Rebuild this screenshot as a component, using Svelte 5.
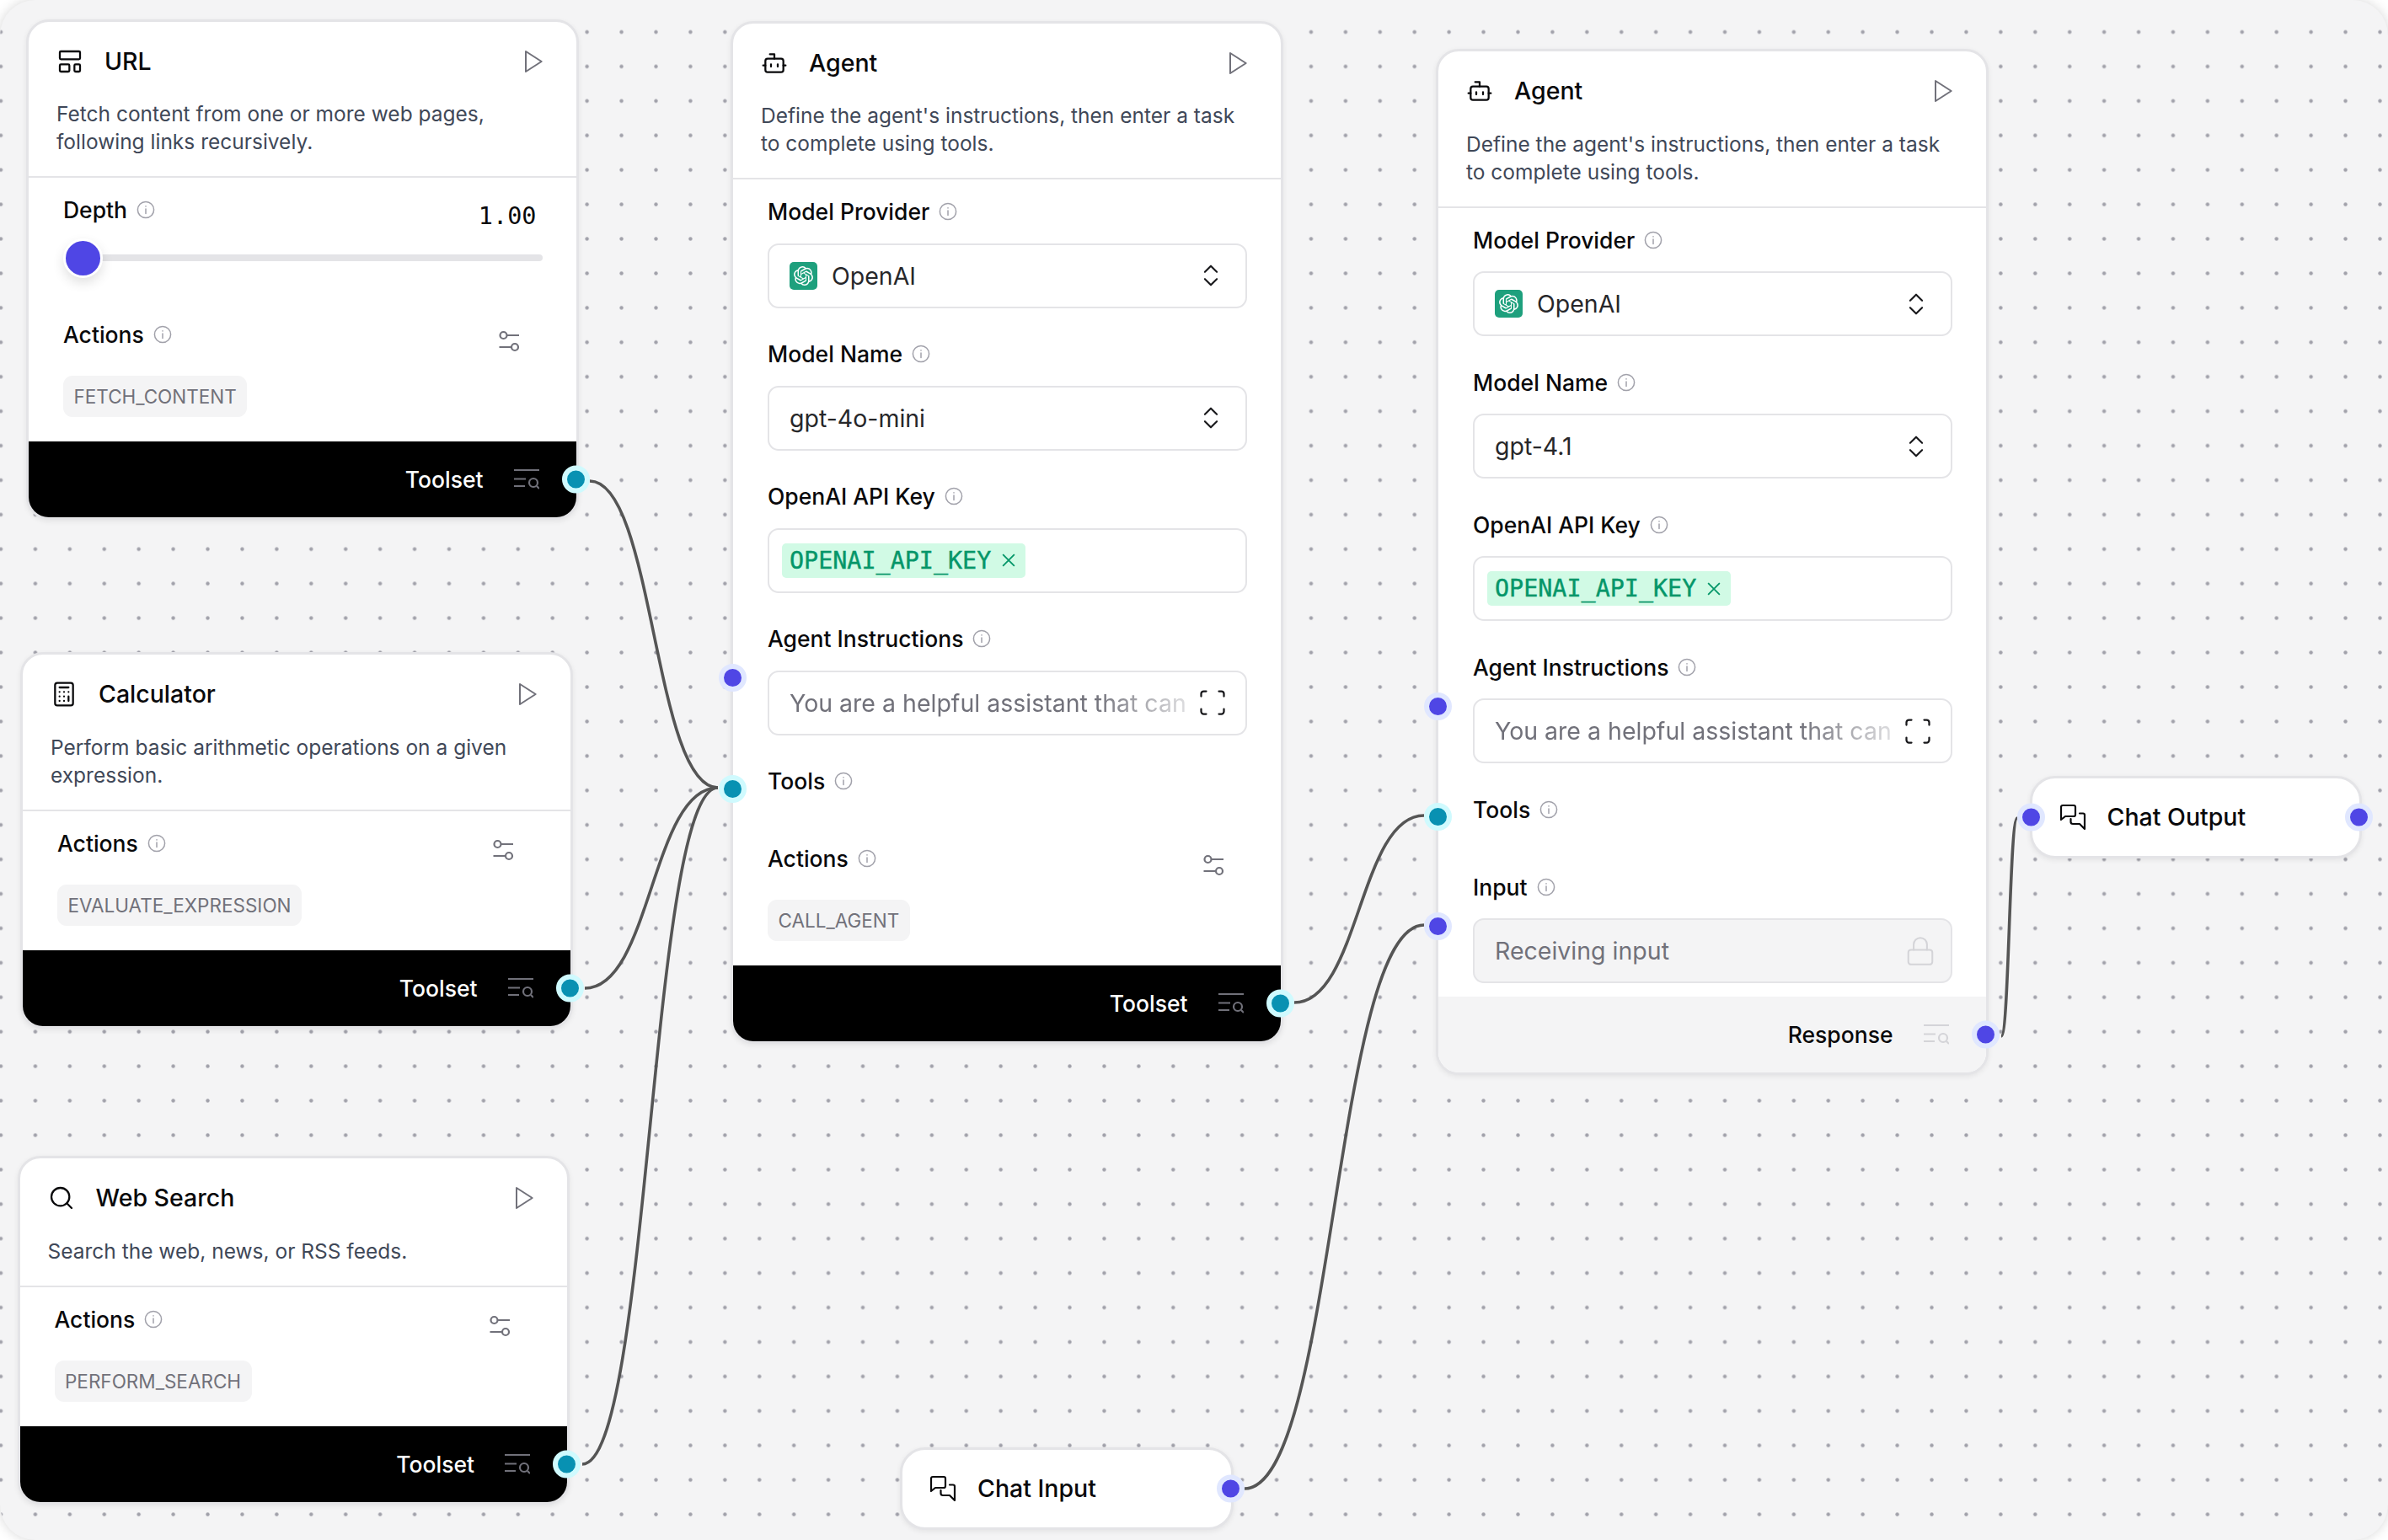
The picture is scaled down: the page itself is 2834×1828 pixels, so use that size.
<script>
  const DOT = 40.92;

  const tools = (name, title, desc, icon, left, top, chip, depth = false) => ({
    name, title, desc, icon, left, top, chip, depth, footer: "Toolset", dark: true
  });

  const agent = (left, top, model, extra) => ({
    title: "Agent",
    desc: "Define the agent's instructions, then enter a task to complete using tools.",
    icon: "bot", left, top, model, extra, agent: true,
    footer: extra ? "Response" : "Toolset", dark: !extra
  });

  const nodes = [
    tools("url", "URL", "Fetch content from one or more web pages, following links recursively.", "layout", 31, 22.5, "FETCH_CONTENT", true),
    tools("calc", "Calculator", "Perform basic arithmetic operations on a given expression.", "calculator", 24, 774, "EVALUATE_EXPRESSION"),
    tools("web", "Web Search", "Search the web, news, or RSS feeds.", "search", 20.5, 1372, "PERFORM_SEARCH"),
    agent(867, 24.5, "gpt-4o-mini", false),
    agent(1704, 58, "gpt-4.1", true)
  ];

  const chats = [
    { title: "Chat Input", left: 1068, top: 1717.5, width: 395.5, input: false },
    { title: "Chat Output", left: 2408.5, top: 921, width: 394.5, input: true }
  ];

  function bez(sx, sy, tx, ty) {
    const mx = (sx + tx) / 2;
    return `M${sx} ${sy} C${mx} ${sy} ${mx} ${ty} ${tx} ${ty}`;
  }

  const edges = [
    bez(700, 571, 852, 935),
    bez(694, 1173, 852, 935),
    bez(691, 1738, 852, 935),
    bez(1536, 1190, 1690, 968),
    bez(1477, 1767, 1690, 1098),
    bez(2375, 1230, 2394, 971)
  ];

  const openai = "M22.2819 9.8211a5.9847 5.9847 0 0 0-.5157-4.9108 6.0462 6.0462 0 0 0-6.5098-2.9A6.0651 6.0651 0 0 0 4.9807 4.1818a5.9847 5.9847 0 0 0-3.9977 2.9 6.0462 6.0462 0 0 0 .7427 7.0966 5.98 5.98 0 0 0 .511 4.9107 6.051 6.051 0 0 0 6.5146 2.9001A5.9847 5.9847 0 0 0 13.2599 24a6.0557 6.0557 0 0 0 5.7718-4.2058 5.9894 5.9894 0 0 0 3.9977-2.9001 6.0557 6.0557 0 0 0-.7475-7.0729zm-9.022 12.6081a4.4755 4.4755 0 0 1-2.8764-1.0408l.1419-.0804 4.7783-2.7582a.7948.7948 0 0 0 .3927-.6813v-6.7369l2.02 1.1686a.071.071 0 0 1 .038.052v5.5826a4.504 4.504 0 0 1-4.4945 4.4944zm-9.6607-4.1254a4.4708 4.4708 0 0 1-.5346-3.0137l.142.0852 4.783 2.7582a.7712.7712 0 0 0 .7806 0l5.8428-3.3685v2.3324a.0804.0804 0 0 1-.0332.0615L9.74 19.9502a4.4992 4.4992 0 0 1-6.1408-1.6464zM2.3408 7.8956a4.485 4.485 0 0 1 2.3655-1.9728V11.6a.7664.7664 0 0 0 .3879.6765l5.8144 3.3543-2.0201 1.1685a.0757.0757 0 0 1-.071 0l-4.8303-2.7865A4.504 4.504 0 0 1 2.3408 7.872zm16.5963 3.8558L13.1038 8.364 15.1192 7.2a.0757.0757 0 0 1 .071 0l4.8303 2.7913a4.4944 4.4944 0 0 1-.6765 8.1042v-5.6772a.79.79 0 0 0-.407-.667zm2.0107-3.0231l-.142-.0852-4.7735-2.7818a.7759.7759 0 0 0-.7854 0L9.409 9.2297V6.8974a.0662.0662 0 0 1 .0284-.0615l4.8303-2.7866a4.4992 4.4992 0 0 1 6.6802 4.66zM8.3065 12.863l-2.02-1.1638a.0804.0804 0 0 1-.038-.0567V6.0742a4.4992 4.4992 0 0 1 7.3757-3.4537l-.142.0805L8.704 5.459a.7948.7948 0 0 0-.3927.6813zm1.0976-2.3654l2.602-1.4998 2.6069 1.4998v2.9994l-2.5974 1.4997-2.6067-1.4997Z";
</script>

{#snippet nodeIcon(kind)}
  <svg class="icon" viewBox="0 0 24 24">
    {#if kind === "layout"}
      <rect x="3" y="3" width="18" height="7" rx="1" />
      <rect x="3" y="14.5" width="8.5" height="6.5" rx="1" />
      <rect x="16" y="14.5" width="5" height="6.5" rx="1" />
    {:else if kind === "bot"}
      <path d="M12 8V4H8" />
      <rect x="4" y="8" width="16" height="12" rx="2" />
      <path d="M2 14h2M20 14h2M15 13v2M9 13v2" />
    {:else if kind === "calculator"}
      <rect x="4" y="2" width="16" height="20" rx="2" />
      <path d="M8 6h8M16 14v4M16 10h.01M12 10h.01M8 10h.01M12 14h.01M8 14h.01M12 18h.01M8 18h.01" />
    {:else if kind === "search"}
      <circle cx="11" cy="11" r="8" />
      <path d="m21 21-4.3-4.3" />
    {/if}
  </svg>
{/snippet}

{#snippet info()}
  <svg class="info" viewBox="0 0 22 22">
    <circle cx="11" cy="11" r="9.6" />
    <path d="M11 10v5.5M11 6.8v.3" />
  </svg>
{/snippet}

{#snippet label(text)}
  <div class="label">{text}{@render info()}</div>
{/snippet}

{#snippet handle(side, color, place)}
  <span class="handle {side} {color} {place}"></span>
{/snippet}

{#snippet chevrons()}
  <svg class="chevrons" viewBox="0 0 24 24"><path d="m7 15 5 5 5-5M7 9l5-5 5 5" /></svg>
{/snippet}

{#snippet actions(chip)}
  <div class="field actions">
    <div class="label-row">
      {@render label("Actions")}
      <svg class="sliders" viewBox="0 0 32 32">
        <circle cx="9.5" cy="8" r="4" />
        <path d="M13.5 8H28M4.5 22H19" />
        <circle cx="23" cy="22" r="4" />
      </svg>
    </div>
    <div><span class="chip">{chip}</span></div>
  </div>
{/snippet}

{#snippet agentBody(node)}
  <div class="field">
    {@render label("Model Provider")}
    <div class="control">
      <span class="logo"><svg viewBox="0 0 24 24"><path d={openai} /></svg></span>
      <span class="value">OpenAI</span>
      {@render chevrons()}
    </div>
  </div>
  <div class="field">
    {@render label("Model Name")}
    <div class="control">
      <span class="value">{node.model}</span>
      {@render chevrons()}
    </div>
  </div>
  <div class="field">
    {@render label("OpenAI API Key")}
    <div class="control key">
      <span class="secret">
        OPENAI_API_KEY
        <svg viewBox="5 5 14 14"><path d="M18 6 6 18M6 6l12 12" /></svg>
      </span>
    </div>
  </div>
  <div class="field">
    {@render handle("left", "indigo", "at-control")}
    {@render label("Agent Instructions")}
    <div class="control">
      <span class="value faded">You are a helpful assistant that can</span>
      <svg class="expand" viewBox="0 0 24 24">
        <path d="M3 7V5a2 2 0 0 1 2-2h2M17 3h2a2 2 0 0 1 2 2v2M21 17v2a2 2 0 0 1-2 2h-2M7 21H5a2 2 0 0 1-2-2v-2" />
      </svg>
    </div>
  </div>
  <div class="field bare">
    {@render handle("left", "cyan", "at-label")}
    {@render label("Tools")}
  </div>
  {#if node.extra}
    <div class="field last">
      {@render handle("left", "indigo", "at-control")}
      {@render label("Input")}
      <div class="control disabled">
        <span class="value muted">Receiving input</span>
        <svg class="lock" viewBox="0 0 24 24">
          <rect x="3" y="11" width="18" height="11" rx="2" />
          <path d="M7 11V7a5 5 0 0 1 10 0v4" />
        </svg>
      </div>
    </div>
  {:else}
    {@render actions("CALL_AGENT")}
  {/if}
{/snippet}

<div class="canvas">
  <svg class="wires" width="2834" height="1828">
    <defs>
      <pattern id="dots" x={1 - DOT / 2} y={38 - DOT / 2} width={DOT} height={DOT} patternUnits="userSpaceOnUse">
        <circle cx={DOT / 2} cy={DOT / 2} r="2.2" fill="#a1a1aa" />
      </pattern>
    </defs>
    <rect width="2834" height="1828" fill="url(#dots)" />
    {#each edges as d}
      <path {d} class="edge" />
    {/each}
  </svg>

  {#each nodes as node}
    <article class="node" style="left: {node.left}px; top: {node.top}px">
      <header class="head">
        <div class="title-row">
          {@render nodeIcon(node.icon)}
          <h2>{node.title}</h2>
          <svg class="play" viewBox="0 0 24 24"><path d="M6 3l14 9-14 9z" /></svg>
        </div>
        <p>{node.desc}</p>
      </header>
      <div class="body">
        {#if node.agent}
          {@render agentBody(node)}
        {:else}
          {#if node.depth}
            <div class="field depth">
              <div class="label-row">
                {@render label("Depth")}
                <span class="amount">1.00</span>
              </div>
              <div class="slider"><span class="thumb"></span><span class="track"></span></div>
            </div>
          {/if}
          {@render actions(node.chip)}
        {/if}
      </div>
      <footer class="foot" class:dark={node.dark}>
        <span>{node.footer}</span>
        <svg class="foot-icon" viewBox="0 0 30 24">
          <path d="M0 1h30M0 11.5h14M0 20h13" />
          <circle cx="23" cy="16" r="5" />
          <path d="m27 20 3 3" />
        </svg>
        {@render handle("right", node.dark ? "cyan" : "indigo", "middle")}
      </footer>
    </article>
  {/each}

  {#each chats as chat}
    <article class="node chat" style="left: {chat.left}px; top: {chat.top}px; width: {chat.width}px">
      {#if chat.input}
        {@render handle("left", "indigo", "middle")}
      {/if}
      <svg class="icon" viewBox="15 14 32 32">
        <path d="M16 33V18q0-2 2-2h13q2 0 2 2v9q0 2-2 2H21z" />
        <path d="M38 25.500h4q2 0 2 2V44l-6-6h-8q-2.500 0-2.500-2.500V32" />
      </svg>
      <h2>{chat.title}</h2>
      {@render handle("right", "indigo", "middle")}
    </article>
  {/each}
</div>

<style>
  :global(body) {
    background: #fff;
  }

  .canvas {
    position: relative;
    width: 2834px;
    height: 1828px;
    overflow: hidden;
    background: #f4f4f5;
    border-radius: 42px;
    box-shadow: 0 0 14px rgba(0, 0, 0, 0.16);
    font-family: Inter, "Liberation Sans", sans-serif;
    color: #09090b;
  }

  .wires {
    position: absolute;
    left: 0;
    top: 0;
  }

  .edge {
    fill: none;
    stroke: #555;
    stroke-width: 3.600;
  }

  .node {
    position: absolute;
    box-sizing: border-box;
    width: 655.500px;
    background: #fff;
    border: 3px solid #e4e4e7;
    border-radius: 27px;
    box-shadow: 0 2px 6px rgba(0, 0, 0, 0.07);
  }

  .head {
    padding: 27px 36px 24px 33px;
    border-bottom: 2.500px solid #e4e4e7;
  }

  .title-row {
    display: flex;
    align-items: center;
    gap: 25px;
    height: 40px;
  }

  h2 {
    flex: 1;
    margin: 0;
    font-size: 28.500px;
    font-weight: 500;
    line-height: 40px;
  }

  .icon {
    flex: none;
    width: 32px;
    height: 32px;
    fill: none;
    stroke: #09090b;
    stroke-width: 1.700;
    stroke-linecap: round;
    stroke-linejoin: round;
  }

  .chat .icon {
    stroke-width: 2.200;
  }

  .play {
    flex: none;
    width: 32px;
    height: 32px;
    fill: none;
    stroke: #71717a;
    stroke-width: 1.500;
    stroke-linejoin: round;
  }

  .head p {
    margin: 26.500px 0 0;
    max-width: 570px;
    font-size: 24.500px;
    line-height: 33px;
    color: #3f4858;
  }

  .body {
    padding: 21.500px 40px 0 41px;
  }

  .field {
    position: relative;
    display: flex;
    flex-direction: column;
    gap: 21px;
    margin-bottom: 38px;
  }

  .field.bare {
    margin-bottom: 59px;
  }

  .field.last {
    margin-bottom: 16px;
  }

  .field.actions {
    gap: 32.500px;
    margin-bottom: 29px;
  }

  .field.depth {
    gap: 17px;
    margin-bottom: 51px;
  }

  .label-row {
    display: flex;
    justify-content: space-between;
    align-items: flex-start;
    height: 33px;
  }

  .label {
    display: flex;
    align-items: center;
    gap: 11px;
    height: 33px;
    font-size: 26.500px;
    font-weight: 500;
  }

  .info {
    width: 22px;
    height: 22px;
    fill: none;
    stroke: #a1a1aa;
    stroke-width: 1.500;
    stroke-linecap: round;
  }

  .sliders {
    flex: none;
    width: 32px;
    height: 32px;
    margin: 9.500px 24px 0 0;
    fill: none;
    stroke: #71717a;
    stroke-width: 2.200;
  }

  .amount {
    margin: 7px 7px 0 0;
    font-family: "DejaVu Sans Mono", "Liberation Mono", monospace;
    font-size: 28.500px;
    line-height: 33px;
  }

  .slider {
    display: flex;
    align-items: center;
    height: 47px;
  }

  .thumb {
    position: relative;
    z-index: 1;
    flex: none;
    box-sizing: border-box;
    width: 47px;
    height: 47px;
    background: #4f46e5;
    border: 3px solid #fff;
    border-radius: 50%;
    box-shadow: 0 6px 14px rgba(0, 0, 0, 0.12);
  }

  .track {
    flex: 1;
    height: 8px;
    margin-left: -20px;
    background: #e4e4e7;
    border-radius: 4px;
  }

  .chip {
    display: inline-block;
    height: 49px;
    padding: 0 12.500px;
    background: #f4f4f5;
    border-radius: 11px;
    font-size: 22.500px;
    line-height: 49px;
    color: #71717a;
  }

  .control {
    box-sizing: border-box;
    display: flex;
    align-items: center;
    height: 77px;
    padding: 0 24px;
    background: #fff;
    border: 2.500px solid #e4e4e7;
    border-radius: 13px;
  }

  .control.key {
    padding-left: 15px;
  }

  .control.disabled {
    background: #f4f4f5;
    padding-right: 17px;
  }

  .logo {
    flex: none;
    display: flex;
    align-items: center;
    justify-content: center;
    width: 33px;
    height: 33px;
    margin-right: 17px;
    background: #1ea07d;
    border-radius: 5px;
  }

  .logo svg {
    width: 23px;
    height: 23px;
    fill: #fff;
  }

  .value {
    flex: 1;
    min-width: 0;
    white-space: nowrap;
    font-size: 28.500px;
    color: #27272a;
  }

  .value.faded,
  .value.muted {
    color: #71717a;
  }

  .value.faded {
    -webkit-mask-image: linear-gradient(90deg, #000 76%, rgba(0, 0, 0, 0.2) 100%);
    mask-image: linear-gradient(90deg, #000 76%, rgba(0, 0, 0, 0.2) 100%);
  }

  .chevrons {
    flex: none;
    width: 34px;
    height: 34px;
    fill: none;
    stroke: #18181b;
    stroke-width: 1.500;
    stroke-linecap: round;
    stroke-linejoin: round;
  }

  .expand {
    flex: none;
    width: 36px;
    height: 36px;
    margin: 0 -3px 0 8px;
    fill: none;
    stroke: #18181b;
    stroke-width: 1.500;
    stroke-linecap: round;
    stroke-linejoin: round;
  }

  .lock {
    flex: none;
    width: 38px;
    height: 38px;
    fill: none;
    stroke: #d4d4d8;
    stroke-width: 1.300;
    stroke-linecap: round;
    stroke-linejoin: round;
  }

  .secret {
    display: flex;
    align-items: center;
    gap: 13px;
    height: 41px;
    padding: 0 12px 0 9px;
    background: #d1fae5;
    border-radius: 5px;
    font-family: "DejaVu Sans Mono", "Liberation Mono", monospace;
    font-size: 28.400px;
    color: #059669;
    -webkit-text-stroke: 0.4px #059669;
  }

  .secret svg {
    width: 16px;
    height: 16px;
    fill: none;
    stroke: #059669;
    stroke-width: 1.600;
  }

  .foot {
    position: relative;
    display: flex;
    align-items: center;
    justify-content: flex-end;
    gap: 36px;
    height: 90px;
    padding-right: 44px;
    background: #f4f4f5;
    border-radius: 0 0 24px 24px;
    font-size: 26.500px;
    font-weight: 500;
  }

  .foot.dark {
    background: #000;
    color: #fff;
  }

  .foot-icon {
    width: 30px;
    height: 24px;
    fill: none;
    stroke: #d4d4d8;
    stroke-width: 2.200;
  }

  .foot.dark .foot-icon {
    stroke: #71717a;
  }

  .handle {
    position: absolute;
    z-index: 2;
    box-sizing: border-box;
    width: 33px;
    height: 33px;
    border: 6.500px solid;
    border-radius: 50%;
  }

  .handle.indigo {
    background: #4f46e5;
    border-color: #e0e7ff;
  }

  .handle.cyan {
    background: #0891b2;
    border-color: #cffafe;
  }

  .handle.right {
    right: -16px;
  }

  .handle.left {
    left: -58.500px;
  }

  .handle.middle {
    top: 50%;
    transform: translateY(-50%);
  }

  .handle.at-label {
    top: 9px;
  }

  .handle.at-control {
    top: 46.500px;
  }

  .node.chat {
    display: flex;
    align-items: center;
    gap: 24px;
    height: 98px;
    padding-left: 33px;
    border-radius: 30px;
  }

  .node.chat .handle.left {
    left: -17.500px;
  }
</style>
